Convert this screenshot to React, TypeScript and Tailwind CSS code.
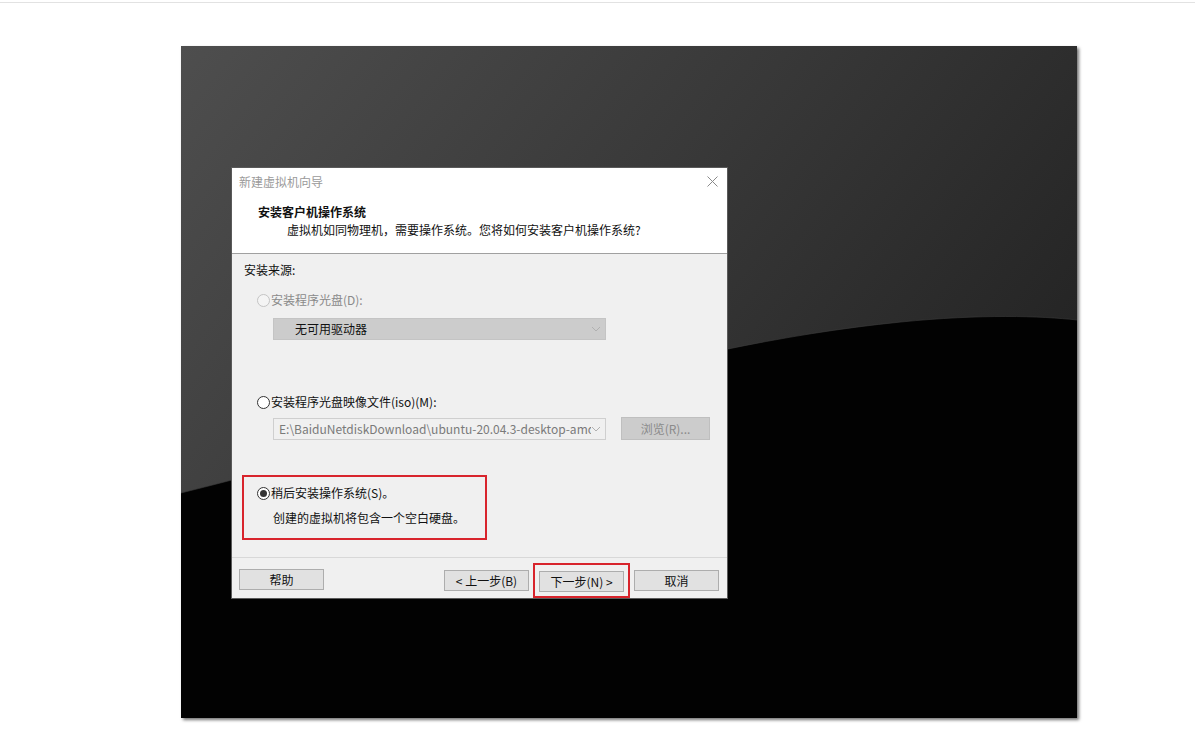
import type { ReactNode } from 'react'

const FONT = "font-['Noto_Sans_CJK_SC','Microsoft_YaHei',sans-serif]"

// Windows-style radio button
const Radio = ({ checked = false, disabled = false }: { checked?: boolean; disabled?: boolean }) => (
  <span
    className={`flex items-center justify-center w-[13px] h-[13px] rounded-full border ${
      disabled ? 'border-[#c4c4c4] bg-[#f4f4f4]' : 'border-[#333] bg-white'
    }`}
  >
    {checked && <span className="w-[7px] h-[7px] rounded-full bg-[#333]" />}
  </span>
)

const Chevron = ({ color = '#a0a0a0' }: { color?: string }) => (
  <svg width="10" height="6" viewBox="0 0 10 6" fill="none">
    <path d="M1 1l4 4 4-4" stroke={color} strokeWidth="1" />
  </svg>
)

const Button = ({ children }: { children: ReactNode }) => (
  <div className="flex items-center justify-center w-[85px] h-[21px] border border-[#adadad] bg-[#e1e1e1] text-[12px] text-[#111]">
    {children}
  </div>
)

// VMware style wallpaper behind the wizard
const Wallpaper = () => (
  <svg className="absolute inset-0" width="896" height="672" viewBox="0 0 896 672">
    <defs>
      <linearGradient id="wp-top" x1="0" y1="0" x2="1" y2="0.6">
        <stop offset="0" stopColor="#4e4e4e" />
        <stop offset="0.5" stopColor="#383838" />
        <stop offset="1" stopColor="#212121" />
      </linearGradient>
    </defs>
    <rect width="896" height="672" fill="url(#wp-top)" />
    <path
      d="M0 447 C 250 385, 480 300, 720 276 C 800 268, 860 270, 896 274 L896 672 L0 672 Z"
      fill="#020202"
    />
    <path
      d="M0 447 C 250 385, 480 300, 720 276 C 800 268, 860 270, 896 274"
      fill="none"
      stroke="#3c3c3c"
      strokeWidth="1"
      opacity="0.6"
    />
  </svg>
)

const App = () => {
  return (
    <div className={`w-full h-[743px] bg-white overflow-hidden ${FONT}`}>
      <div className="mt-[2px] h-px bg-[#e2e2e2]" />

      <div className="pl-[181px] pt-[43px]">
        <div className="relative w-[896px] h-[672px] shadow-[2px_2px_3px_rgba(0,0,0,0.55)]">
          <Wallpaper />

          {/* Wizard dialog */}
          <div className="relative ml-[50px] pt-[121px]">
            <div className="w-[497px] h-[432px] flex flex-col border border-[#5a5a5a] bg-[#f0f0f0]">
              {/* Header */}
              <div className="h-[86px] shrink-0 bg-white border-b border-[#a0a0a0] flex flex-col">
                <div className="flex items-center justify-between h-[27px] pl-[7px] pr-[9px]">
                  <span className="text-[12px] text-[#9a9a9a]">新建虚拟机向导</span>
                  <svg width="11" height="11" viewBox="0 0 11 11">
                    <path d="M0.5 0.5l10 10M10.5 0.5l-10 10" stroke="#8a8a8a" strokeWidth="1" />
                  </svg>
                </div>
                <div className="pl-[26px] pt-[8px] text-[12px] leading-[18px] font-bold text-[#111]">
                  安装客户机操作系统
                </div>
                <div className="pl-[55px] text-[12px] leading-[18px] text-[#111]">
                  虚拟机如同物理机，需要操作系统。您将如何安装客户机操作系统?
                </div>
              </div>

              {/* Body */}
              <div className="flex-1 flex flex-col text-[12px] text-[#111] pl-[12px]">
                <div className="pt-[8px] leading-[16px]">安装来源:</div>

                <div className="flex items-center gap-[1px] mt-[14px] pl-[13px] text-[#8a8a8a] leading-[16px]">
                  <Radio disabled />
                  <span>安装程序光盘(D):</span>
                </div>
                <div className="mt-[10px] ml-[29px] w-[333px] h-[22px] flex items-center justify-between bg-[#cccccc] border border-[#c4c4c4] pl-[21px] pr-[4px]">
                  <span className="text-[#111]">无可用驱动器</span>
                  <Chevron color="#b0b0b0" />
                </div>

                <div className="flex items-center gap-[1px] mt-[54px] pl-[13px] leading-[16px]">
                  <Radio />
                  <span>安装程序光盘映像文件(iso)(M):</span>
                </div>
                <div className="flex items-center mt-[7px] ml-[29px] gap-[15px]">
                  <div className="w-[333px] h-[22px] flex items-center justify-between bg-[#f0f0f0] border border-[#cfcfcf] pl-[5px] pr-[4px] overflow-hidden">
                    <span className="text-[#7a7a7a] whitespace-nowrap overflow-hidden w-[312px]">
                      E:\BaiduNetdiskDownload\ubuntu-20.04.3-desktop-amd64.iso
                    </span>
                    <Chevron color="#b0b0b0" />
                  </div>
                  <div className="flex items-center justify-center w-[89px] h-[23px] bg-[#cccccc] border border-[#bfbfbf] text-[#8a8a8a]">
                    浏览(R)...
                  </div>
                </div>

                {/* Highlighted option */}
                <div className="mt-[35px] ml-[-2px] w-[245px] h-[65px] border-2 border-[#d8242c] flex flex-col">
                  <div className="flex items-center gap-[1px] mt-[8px] pl-[13px] leading-[16px]">
                    <Radio checked />
                    <span>稍后安装操作系统(S)。</span>
                  </div>
                  <div className="mt-[9px] pl-[29px] leading-[16px]">创建的虚拟机将包含一个空白硬盘。</div>
                </div>
              </div>

              {/* Footer */}
              <div className="h-[41px] shrink-0 border-t border-[#d8d8d8] flex items-start justify-between pt-[11px] pl-[7px] pr-[8px]">
                <Button>帮助</Button>
                <div className="flex items-center">
                  <Button>&lt; 上一步(B)</Button>
                  <div className="ml-[4px] -my-[6px] pt-[6px] pb-[4px] px-[4px] border-2 border-[#d8242c]">
                    <Button>下一步(N) &gt;</Button>
                  </div>
                  <div className="ml-[4px]">
                    <Button>取消</Button>
                  </div>
                </div>
              </div>
            </div>
          </div>
        </div>
      </div>
    </div>
  )
}

export default App
